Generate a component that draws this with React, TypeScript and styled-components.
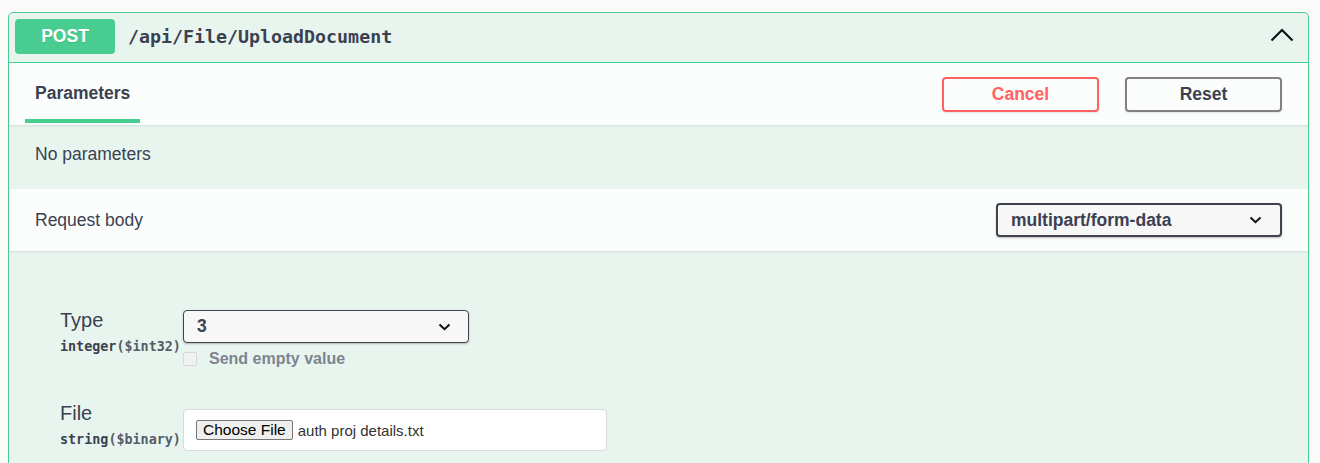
import React from 'react'
import styled, { createGlobalStyle } from 'styled-components'

const GlobalStyle = createGlobalStyle`
  html, body {
    margin: 0;
    background: #fafafa;
    font-family: "Liberation Sans", Arial, sans-serif;
    color: #3b4151;
  }
`

const Page = styled.div`
  height: 463px;
  overflow: hidden;
  padding: 12px 11px 0 8px;
  box-sizing: border-box;
`

const Opblock = styled.div`
  border: 1px solid #49cc90;
  border-radius: 5px;
  background: #e8f5ef;
  min-height: 600px;
`

const Summary = styled.div`
  display: flex;
  align-items: center;
  padding: 6px 14px 8px 6px;
  border-bottom: 1px solid #49cc90;
`

const Method = styled.span`
  display: flex;
  align-items: center;
  justify-content: center;
  width: 100px;
  height: 35px;
  border-radius: 4px;
  background: #49cc90;
  color: #fff;
  font-size: 17.5px;
  font-weight: 700;
  text-shadow: 0 1px 0 rgba(0, 0, 0, 0.1);
`

const Path = styled.span`
  margin-left: 13px;
  font-family: "DejaVu Sans Mono", "Liberation Mono", monospace;
  font-weight: 700;
  font-size: 18.3px;
  color: #3b4151;
  flex: 1;
`

const Arrow = styled.svg`
  margin-bottom: 3px;
`

const SectionHeader = styled.div`
  display: flex;
  align-items: center;
  height: 62px;
  padding: 0 26px 0 16px;
  background: rgba(255, 255, 255, 0.8);
  box-shadow: 0 1px 2px rgba(0, 0, 0, 0.1);
  position: relative;
`

const Tab = styled.div`
  align-self: stretch;
  display: flex;
  align-items: center;
  padding: 4px 10px 0;
  margin-bottom: 2px;
  border-bottom: 4px solid #49cc90;
  font-size: 17.5px;
  font-weight: 700;
`

const Actions = styled.div`
  margin-left: auto;
  display: flex;
  gap: 26px;
`

const Btn = styled.button<{ $tone: 'cancel' | 'reset' }>`
  width: 157px;
  height: 35px;
  border-radius: 4px;
  background: transparent;
  font-family: "Liberation Sans", Arial, sans-serif;
  font-size: 17.5px;
  font-weight: 700;
  border: 2px solid ${p => (p.$tone === 'cancel' ? '#ff6060' : '#808080')};
  color: ${p => (p.$tone === 'cancel' ? '#ff6060' : '#3b4151')};
  box-shadow: 0 1px 2px rgba(0, 0, 0, 0.1);
`

const Description = styled.div`
  padding: 19px 26px 25px;
  font-size: 17.5px;
  line-height: 20px;
`

const HeaderLabel = styled.div`
  font-size: 17.5px;
  flex: 1;
  padding-left: 10px;
`

const Select = styled.div<{ $size: 'lg' | 'sm' }>`
  width: 286px;
  height: ${p => (p.$size === 'lg' ? 34 : 33)}px;
  box-sizing: border-box;
  display: flex;
  align-items: center;
  justify-content: space-between;
  padding: 0 ${p => (p.$size === 'lg' ? 18 : 17)}px 0 13px;
  border: ${p => (p.$size === 'lg' ? 2 : 1)}px solid #41444e;
  border-radius: 4px;
  background: #f7f7f7;
  box-shadow: 0 1px 2px 0 rgba(0, 0, 0, 0.25);
  font-size: 17.5px;
  font-weight: 700;
  color: #3b4151;
`

const Body = styled.div`
  padding: 57px 0 0 51px;
  display: flex;
  flex-direction: column;
  gap: 33px;
`

const ParamRow = styled.div`
  display: grid;
  grid-template-columns: 123px 1fr;
`

const NameCol = styled.div`
  display: flex;
  flex-direction: column;
`

const ParamName = styled.div`
  font-size: 20px;
  line-height: 24px;
`

const ParamType = styled.div`
  margin-top: 6px;
  font-family: "DejaVu Sans Mono", "Liberation Mono", monospace;
  font-weight: 700;
  font-size: 13.4px;
  line-height: 18px;
  white-space: nowrap;
  span {
    color: #555b66;
  }
`

const InputCol = styled.div<{ $top: number }>`
  padding-top: ${p => p.$top}px;
`

const EmptyToggle = styled.label`
  display: flex;
  align-items: center;
  gap: 12px;
  height: 18px;
  margin-top: 7px;
  font-size: 16px;
  font-weight: 700;
  color: #7d8391;
`

const CheckBox = styled.span`
  width: 14px;
  height: 14px;
  box-sizing: border-box;
  border: 1px solid #d3d8d6;
  border-radius: 2px;
  background: #eef3f1;
`

const FileBox = styled.div`
  width: 424px;
  height: 42px;
  box-sizing: border-box;
  display: flex;
  align-items: center;
  gap: 5px;
  padding-left: 12px;
  border: 1px solid #d9d9d9;
  border-radius: 4px;
  background: #fff;
  font-size: 15px;
  color: #333;
`

const ChooseBtn = styled.span`
  display: inline-block;
  padding: 1px 6px;
  line-height: 16px;
  border: 1px solid #767676;
  border-radius: 2px;
  background: #efefef;
  color: #000;
  font-size: 15.5px;
`

const Chevron = () => (
  <svg width="13" height="8" viewBox="0 0 13 8">
    <polyline points="1.5,1.5 6.5,6.2 11.5,1.5" fill="none" stroke="#111" strokeWidth="2" />
  </svg>
)

const App = () => {
  return (
    <Page>
      <GlobalStyle />
      <Opblock>
        <Summary>
          <Method>POST</Method>
          <Path>/api/File/UploadDocument</Path>
          <Arrow width="24" height="14" viewBox="0 0 24 14">
            <polyline points="1.5,12.5 12,2 22.5,12.5" fill="none" stroke="#111" strokeWidth="2.2" />
          </Arrow>
        </Summary>

        <SectionHeader>
          <Tab>Parameters</Tab>
          <Actions>
            <Btn $tone="cancel">Cancel</Btn>
            <Btn $tone="reset">Reset</Btn>
          </Actions>
        </SectionHeader>

        <Description>No parameters</Description>

        <SectionHeader>
          <HeaderLabel>Request body</HeaderLabel>
          <Select $size="lg">
            multipart/form-data
            <Chevron />
          </Select>
        </SectionHeader>

        <Body>
          <ParamRow>
            <NameCol>
              <ParamName>Type</ParamName>
              <ParamType>integer<span>($int32)</span></ParamType>
            </NameCol>
            <InputCol $top={2}>
              <Select $size="sm">
                3
                <Chevron />
              </Select>
              <EmptyToggle>
                <CheckBox />
                Send empty value
              </EmptyToggle>
            </InputCol>
          </ParamRow>

          <ParamRow>
            <NameCol>
              <ParamName>File</ParamName>
              <ParamType>string<span>($binary)</span></ParamType>
            </NameCol>
            <InputCol $top={8}>
              <FileBox>
                <ChooseBtn>Choose File</ChooseBtn>
                auth proj details.txt
              </FileBox>
            </InputCol>
          </ParamRow>
        </Body>
      </Opblock>
    </Page>
  )
}

export default App
